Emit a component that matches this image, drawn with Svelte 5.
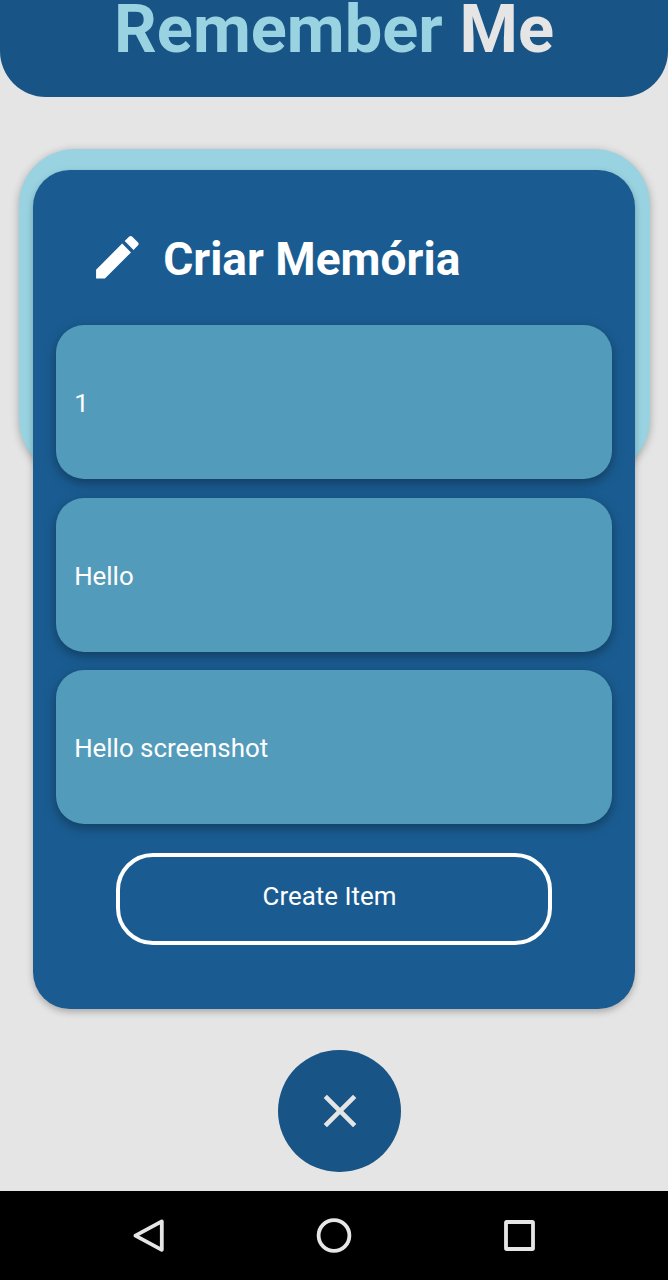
<script>
  let fields = $state(['1', 'Hello', 'Hello screenshot']);
</script>

<div class="screen">
  <header><h1>Remember <span>Me</span></h1></header>

  <main>
    <div class="backdrop"></div>
    <section class="card">
      <div class="heading">
        <svg viewBox="0 0 24 24" width="56.6" height="56.6" fill="#fff">
          <path d="M3 17.25V21h3.75L17.81 9.94l-3.75-3.75L3 17.25zM20.71 7.04a1 1 0 0 0 0-1.41l-2.34-2.34a1 1 0 0 0-1.41 0l-1.83 1.83 3.75 3.75 1.83-1.83z" />
        </svg>
        <h2>Criar Memória</h2>
      </div>
      <div class="fields">
        {#each fields as value}
          <div class="field">{value}</div>
        {/each}
      </div>
      <button class="create"><span>Create Item</span></button>
    </section>
    <button class="close" aria-label="Close">
      <svg viewBox="0 0 24 24" width="56" height="56" fill="#e5e5e5">
        <path d="M19 6.41 17.59 5 12 10.59 6.41 5 5 6.41 10.59 12 5 17.59 6.41 19 12 13.41 17.59 19 19 17.59 13.41 12z" />
      </svg>
    </button>
  </main>

  <nav>
    <svg width="40" height="40" viewBox="0 0 40 40"><path d="M32.8 6.4 V34.8 L6.4 20.6 Z" /></svg>
    <svg width="40" height="40" viewBox="0 0 40 40"><circle cx="20" cy="20.5" r="15.4" /></svg>
    <svg width="40" height="40" viewBox="0 0 40 40"><rect x="6" y="7" width="27" height="27" rx="0.8" /></svg>
  </nav>
</div>

<style>
  :global(body) { margin: 0; background: #e5e5e5; }
  .screen {
    width: 668px;
    height: 1280px;
    display: flex;
    flex-direction: column;
    overflow: hidden;
    background: #e5e5e5;
    font-family: Roboto, sans-serif;
  }
  header {
    flex: none;
    height: 97.4px;
    box-sizing: border-box;
    background: #185485;
    border-radius: 0 0 46px 46px;
    text-align: center;
  }
  h1 {
    margin: 0;
    font-size: 66.8px;
    line-height: 58px;
    font-weight: 700;
    color: #99d3e1;
    white-space: nowrap;
  }
  h1 span { color: #e5e5e5; }
  main {
    flex: 1;
    display: grid;
    grid-template-columns: 1fr;
    grid-template-rows: 911.2px auto;
    justify-items: center;
    align-content: start;
    padding-top: 51.8px;
    box-sizing: border-box;
  }
  .backdrop {
    grid-area: 1 / 1;
    width: 631px;
    height: 326px;
    border-radius: 56px;
    background: #99d3e1;
    box-shadow: 0 2px 8px rgba(0, 0, 0, 0.28);
  }
  .card {
    grid-area: 1 / 1;
    z-index: 1;
    width: 601.5px;
    height: 839.2px;
    margin-top: 20.6px;
    box-sizing: border-box;
    padding: 59px 22.7px 0;
    border-radius: 37px;
    background: #1a5c91;
    box-shadow: 0 3px 7px rgba(0, 0, 0, 0.26);
    display: flex;
    flex-direction: column;
    align-items: center;
  }
  .heading {
    align-self: stretch;
    height: 96.2px;
    display: flex;
    gap: 18px;
    padding-left: 32.6px;
  }
  h2 {
    margin: 0;
    font-size: 46.1px;
    line-height: 60px;
    font-weight: 700;
    color: #fff;
    white-space: nowrap;
  }
  .fields {
    align-self: stretch;
    display: flex;
    flex-direction: column;
    gap: 18.7px;
  }
  .field {
    height: 154px;
    box-sizing: border-box;
    padding: 2px 18.2px 0;
    display: flex;
    align-items: center;
    border-radius: 28px;
    background: #539bbb;
    box-shadow: 0 4px 12px rgba(0, 0, 0, 0.34);
    color: #fff;
    font-size: 25.9px;
  }
  .create {
    width: 436px;
    height: 92px;
    margin-top: 29px;
    box-sizing: border-box;
    padding: 0 9px 6px 0;
    border: 4px solid #fff;
    border-radius: 37px;
    background: transparent;
    color: #fff;
    font: 25.9px Roboto, sans-serif;
  }
  .close {
    grid-area: 2 / 1;
    margin: -10.6px 0 0 11px;
    width: 122.6px;
    height: 122.6px;
    padding: 0;
    border: 0;
    border-radius: 50%;
    background: #185485;
    display: grid;
    place-items: center;
  }
  nav {
    flex: none;
    height: 89.3px;
    background: #000;
    display: flex;
    justify-content: center;
    align-items: center;
    gap: 145.5px;
  }
  nav svg {
    fill: none;
    stroke: #e6e6e6;
    stroke-width: 3.8;
    stroke-linejoin: round;
  }
</style>
